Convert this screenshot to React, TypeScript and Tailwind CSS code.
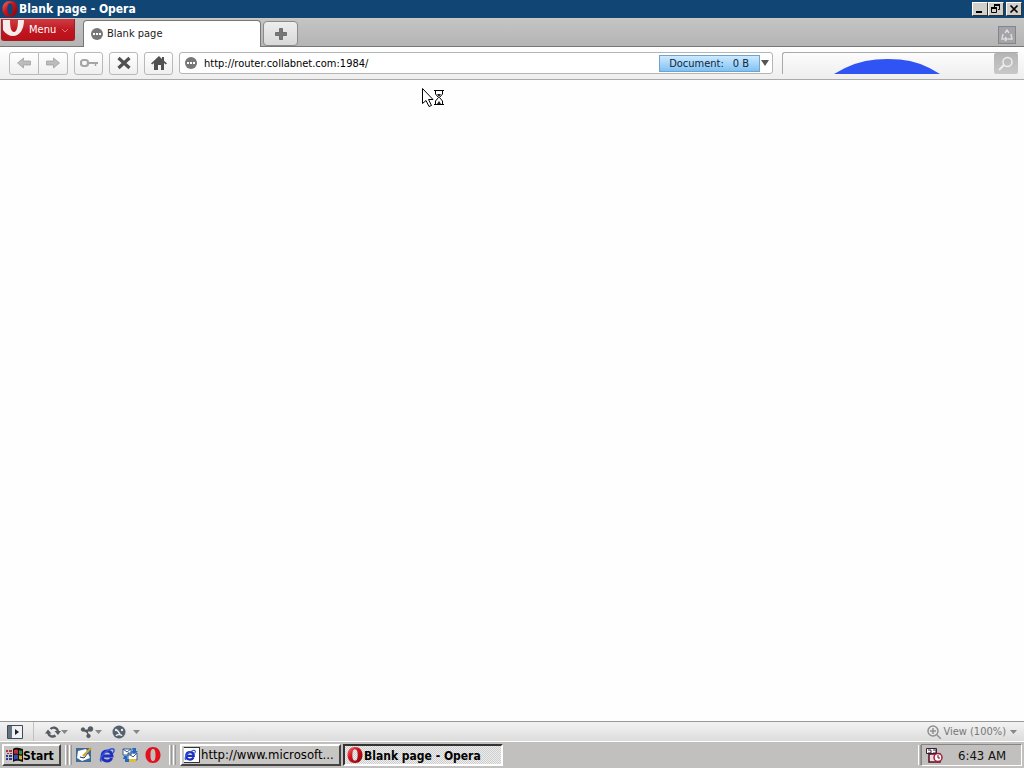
import type { ReactNode } from "react";

const OperaIcon = ({ className = "size-4" }: { className?: string }) => (
  <svg viewBox="0 0 16 16" className={`shrink-0 ${className}`} aria-hidden="true">
    <defs>
      <linearGradient id="operaRed" x1="0" y1="0" x2="1" y2="1">
        <stop offset="0" stopColor="#f0787c" />
        <stop offset=".4" stopColor="#d3131c" />
        <stop offset="1" stopColor="#7a0508" />
      </linearGradient>
    </defs>
    <path fillRule="evenodd" fill="url(#operaRed)" d="M8 0C3.400 0 .5 3.500 .5 8s2.900 8 7.500 8 7.500-3.500 7.500-8S12.600 0 8 0Zm0 2.200c1.900 0 2.700 2.400 2.700 5.800S9.900 13.800 8 13.800 5.300 11.400 5.300 8 6.100 2.200 8 2.200Z" />
  </svg>
);

const BubbleIcon = () => (
  <svg viewBox="0 0 12 12" className="size-3 shrink-0" aria-hidden="true">
    <circle cx="6" cy="6" r="6" fill="#777" />
    <path fill="#fff" d="M2 5h2v2H2zM5 5h2v2H5zM8 5h2v2H8z" />
  </svg>
);

const IeIcon = ({ className = "size-4" }: { className?: string }) => (
  <svg viewBox="0 0 16 16" className={`shrink-0 ${className}`} fill="none" aria-hidden="true">
    <path stroke="#1d2fc0" strokeWidth="3" d="M12.500 11C12 13 10 14 8 14c-3 0-5-2-5-5s2-5 5-5 5 2 5 5H4" />
    <path stroke="#3157d8" strokeWidth="1.500" d="M2.500 14.500C-1 13 5 4 12 2c4-1 3.500 2 2 4" />
  </svg>
);

const ToolButton = ({ label, className, children }: { label: string; className: string; children: ReactNode }) => (
  <button
    type="button"
    aria-label={label}
    className={`flex h-[23px] items-center justify-center border border-[#b9b9b9] bg-linear-to-b from-white to-[#efefef] ${className}`}
  >
    {children}
  </button>
);

const Caret = ({ className = "text-[#888]" }: { className?: string }) => (
  <svg viewBox="0 0 7 4" className={`h-1 w-[7px] shrink-0 ${className}`} aria-hidden="true">
    <path fill="currentColor" d="M0 0h7L3.500 4z" />
  </svg>
);

const raised = "border border-t-white border-l-white border-r-[#333] border-b-[#333]";

const CaptionButton = ({ label, children }: { label: string; children: ReactNode }) => (
  <button type="button" aria-label={label} className={`flex h-[14px] w-4 items-center justify-center bg-[#d2d0cb] ${raised}`}>
    <svg viewBox="0 0 12 10" className="h-[10px] w-3" fill="none" stroke="#000" aria-hidden="true">
      {children}
    </svg>
  </button>
);

const Grip = () => <span className="h-5 w-[3px] shrink-0 border-l border-l-white border-r border-r-[#999]" />;

const TitleBar = () => (
  <header className="flex h-[18px] shrink-0 items-center bg-[#114674] pl-[2px] pr-[2px]">
    <OperaIcon />
    <h1 className="ml-px flex-1 text-[12px] leading-[18px] font-bold text-white">Blank page - Opera</h1>
    <div className="flex">
      <CaptionButton label="Minimize"><path strokeWidth="2" d="M2 8h6" /></CaptionButton>
      <CaptionButton label="Restore">
        <path d="M4.500 3V.5h5v5H8M1.500 4.500h5v4h-5z" />
        <path strokeWidth="2" d="M4 1h6M1 4h6" />
      </CaptionButton>
      <span className="w-[2px]" />
      <CaptionButton label="Close"><path strokeWidth="1.700" d="m2.500 1.500 7 7m0-7-7 7" /></CaptionButton>
    </div>
  </header>
);

const TabBar = () => (
  <div className="flex h-[29px] shrink-0 border-t border-t-[#d0c8bd] bg-linear-to-b from-[#c4c4c4] to-[#b4b4b4]">
    <div className="w-[83px] shrink-0 border-b border-b-[#777]">
      <button type="button" className="ml-px flex h-[22px] w-[74px] items-center rounded-b-[3px] border border-t-0 border-[#9d2024] bg-linear-to-b from-[#cf3b44] via-[#c11720] to-[#b9101a] text-[11px] text-white">
        <svg viewBox="0 0 24 20" className="h-5 w-6 shrink-0" aria-hidden="true">
          <path fillRule="evenodd" fill="#f5ecec" d="M1 0h21c0 9-4 16-11 16-4 0-7-2-10-6Zm7 0c0 7 1 12 4 12s4-6 4-12Z" />
        </svg>
        <span className="ml-[3px] w-8 pt-[2px] text-left">Menu</span>
        <svg viewBox="0 0 8 5" className="mt-px h-[5px] w-2" fill="none" stroke="#dc747a" aria-hidden="true"><path d="m1 1 3 3 3-3" /></svg>
      </button>
    </div>
    <div className="mt-px flex w-[178px] shrink-0 items-center gap-1 rounded-t-[4px] border border-b-0 border-[#777] bg-white pl-[7px] text-[11px] text-[#222]">
      <BubbleIcon />
      <span className="pt-px">Blank page</span>
    </div>
    <div className="flex flex-1 items-start border-b border-b-[#777] pt-[2px] pl-[2px]">
      <button type="button" aria-label="New tab" className="flex h-[25px] w-[35px] items-center justify-center rounded-[4px] border border-[#8b8b8b] bg-linear-to-b from-[#eee] to-[#d8d8d8]">
        <svg viewBox="0 0 12 12" className="size-3" aria-hidden="true"><path fill="#777" stroke="#555" strokeWidth=".7" d="M4.500.5h3v4h4v3h-4v4h-3v-4h-4v-3h4z" /></svg>
      </button>
    </div>
    <div className="border-b border-b-[#777] pt-[7px] pr-2">
      <button type="button" aria-label="Closed tabs" className="flex size-[18px] items-center justify-center border border-[#85858c] bg-[#a3a3a8]">
        <svg viewBox="0 0 14 14" className="size-[14px]" fill="none" stroke="#dcdcdc" strokeWidth="1.500" aria-hidden="true">
          <path d="m5 5 2-3 2 3M3 6l-1 5h4M11 6l1 5H8M5 9l2 2-2 2" />
        </svg>
      </button>
    </div>
  </div>
);

const AddressBar = () => (
  <nav aria-label="Address bar" className="flex h-[33px] shrink-0 items-center border-b border-b-[#aaa] bg-linear-to-b from-white to-[#eee] pl-[9px] pr-[6px]">
    <ToolButton label="Back" className="w-[30px] rounded-l-[3px]">
      <svg viewBox="0 0 14 12" className="h-3 w-[14px]" aria-hidden="true"><path fill="#bdbdbd" stroke="#999" strokeWidth=".7" d="m.5 6 6-5v3h7v4h-7v3z" /></svg>
    </ToolButton>
    <ToolButton label="Forward" className="w-[29px] rounded-r-[3px] border-l-0">
      <svg viewBox="0 0 14 12" className="h-3 w-[14px]" aria-hidden="true"><path fill="#bdbdbd" stroke="#999" strokeWidth=".7" d="m13.500 6-6-5v3h-7v4h7v3z" /></svg>
    </ToolButton>
    <ToolButton label="Wand" className="ml-[6px] w-[29px] rounded-[3px]">
      <svg viewBox="0 0 18 10" className="h-[10px] w-[18px]" fill="none" stroke="#a5a5a5" aria-hidden="true"><rect x="1" y="2" width="7" height="6" rx="2.500" strokeWidth="2.200" /><path strokeWidth="2" d="M8 5h10" /><path strokeWidth="1.500" d="M15.500 5v3" /></svg>
    </ToolButton>
    <ToolButton label="Stop" className="ml-[6px] w-[29px] rounded-[3px]">
      <svg viewBox="0 0 14 14" className="size-[14px]" stroke="#505050" strokeWidth="3.200" aria-hidden="true"><path d="m1.500 2 11 10m0-10-11 10" /></svg>
    </ToolButton>
    <ToolButton label="Home" className="ml-[6px] w-[29px] rounded-[3px]">
      <svg viewBox="0 0 16 14" className="h-[14px] w-4" aria-hidden="true"><path fill="#505050" d="M8 0 0 7.500l1.200 1L3 7v7h4V9h3v5h3V7l1.800 1.500 1.200-1L13 4.800V1h-2v2z" /></svg>
    </ToolButton>
    <div className="ml-[6px] flex h-[22px] min-w-0 flex-[592] items-center rounded-[3px] border border-[#b5b5b5] bg-white pl-[5px] pr-px">
      <BubbleIcon />
      <input aria-label="Address" defaultValue="http://router.collabnet.com:1984/" className="ml-[7px] min-w-0 flex-1 bg-transparent pt-[2px] text-[11px] text-black outline-none" />
      <div className="flex h-[17px] w-[101px] shrink-0 items-center justify-center gap-[9px] border border-[#6fa5cd] bg-linear-to-b from-[#cdeaff] to-[#7fc1f3] pt-[2px] text-[11px] text-[#12243c]">
        <span>Document:</span>
        <span>0 B</span>
      </div>
      <button type="button" aria-label="Address history" className="flex h-5 w-[11px] items-center justify-center">
        <svg viewBox="0 0 8 6" className="h-[6px] w-2" aria-hidden="true"><path fill="#555" d="M0 0h8L4 6z" /></svg>
      </button>
    </div>
    <div className="ml-[9px] flex h-[22px] min-w-0 flex-[238] items-end rounded-tl-[3px] border-t border-l border-[#aaa]">
      <div className="flex h-[21px] min-w-0 flex-1 items-end">
        <input aria-label="Search" className="w-[51px] min-w-0 bg-transparent outline-none" />
        <svg viewBox="0 0 106 15" className="h-[15px] w-[106px] shrink-0" aria-hidden="true"><path fill="#3054f3" d="M0 15Q21 2 42 .5Q53-.3 66 .5Q86 2 106 15Z" /></svg>
      </div>
      <button type="button" aria-label="Start search" className="flex h-[21px] w-6 shrink-0 items-center justify-center rounded-[2px] bg-linear-to-b from-[#b5b5b5] to-[#c8c8c8]">
        <svg viewBox="0 0 18 16" className="h-4 w-[18px]" fill="none" stroke="#eee" strokeWidth="1.500" aria-hidden="true"><circle cx="10.500" cy="6" r="4.500" /><path strokeWidth="2" d="m7 9-5 5" /></svg>
      </button>
    </div>
  </nav>
);

const StatusBar = () => (
  <div className="flex h-5 shrink-0 items-center border-t border-t-[#999] bg-linear-to-b from-[#f3f3f3] to-[#dcdcdc] pl-[7px] pr-[7px]">
    <button type="button" aria-label="Panels" className="flex h-[14px] w-4">
      <svg viewBox="0 0 16 14" className="h-[14px] w-4" aria-hidden="true"><path fill="#eef2f6" stroke="#3f4a57" d="M.5.5h15v13H.5z" /><path fill="#67727f" d="M1 1h4v12H1z" /><path fill="#222" d="m8 4 4 3-4 3z" /></svg>
    </button>
    <span className="ml-[10px] h-full w-px bg-[#c2c2c2]" />
    <button type="button" aria-label="Synchronize" className="ml-[11px] flex items-center">
      <svg viewBox="0 0 16 14" className="h-[14px] w-4" fill="none" stroke="#555b61" strokeWidth="2.400" aria-hidden="true"><path d="M5.500 4C8 1.500 12 2.500 13 6M10.500 10.500C8 12.500 4 11.500 3 8" /><path fill="#555b61" stroke="none" d="M9.500 6H16l-3 4zM0 8.500h6.500L3 4.500z" /></svg>
      <Caret />
    </button>
    <button type="button" aria-label="Share" className="ml-3 flex items-center">
      <svg viewBox="0 0 15 14" className="h-[14px] w-[15px]" fill="#555b61" stroke="#555b61" aria-hidden="true"><circle cx="3" cy="4.500" r="1.700" /><circle cx="10.500" cy="4" r="2.300" /><circle cx="8.500" cy="11" r="1.700" /><path strokeWidth="1.500" d="m3 5 4 2 3-3M7 7l2 4" /></svg>
      <Caret />
    </button>
    <button type="button" aria-label="Turbo" className="ml-[10px] flex items-center gap-[7px]">
      <svg viewBox="0 0 14 14" className="size-[14px]" aria-hidden="true"><circle cx="7" cy="7" r="6.500" fill="#55616c" /><circle cx="4" cy="5" r="1.200" fill="#e8edf0" /><circle cx="10" cy="5" r="1.200" fill="#e8edf0" /><path fill="none" stroke="#e8edf0" strokeWidth="1.500" d="m5 5 3 4M4 11c1-2 5-2 6 0" /></svg>
      <Caret />
    </button>
    <button type="button" className="ml-auto flex items-center text-[11px] text-[#777]">
      <svg viewBox="0 0 14 14" className="mr-[2px] size-[14px]" fill="none" stroke="#909090" strokeWidth="1.500" aria-hidden="true"><circle cx="6" cy="6" r="5" /><path d="M6 3v6M3 6h6M10 10l4 4" /></svg>
      <span className="mr-1 pt-[2px]">View (100%)</span>
      <Caret />
    </button>
  </div>
);

const Taskbar = () => (
  <footer className="flex h-[27px] shrink-0 items-center border-t border-t-white bg-[#c1c0be] pl-[2px] pr-[2px]">
    <button type="button" className="flex h-[22px] w-[59px] shrink-0 items-center border-2 border-t-white border-l-white border-r-[#444] border-b-[#444] bg-[#c8c6c3] pl-[2px] text-[12px] font-bold text-black">
      <svg viewBox="0 0 17 16" className="h-4 w-[17px] shrink-0" aria-hidden="true">
        <path fill="#111" d="M7 2c3-2 5-1 10 0v13c-4-1-7-2-10 0z" />
        <path fill="#c52a38" d="M8 3q2-1 4 0v4q-2-1-4 0z" />
        <path fill="#3c8b4b" d="M13 3.200q2 .8 3 .3v4q-2 0-3-.5z" />
        <path fill="#3548bb" d="M8 8q2-1 4 0v4.500q-2-1-4 .5z" />
        <path fill="#cbb32b" d="M13 8.200q2 .8 3 .3v4q-2 0-3-.5z" />
        <path fill="#a73549" d="M0 3h2v2H0zM3 3h3v2H3zM1 6h2v1H1zM4 6h2v1H4z" />
        <path fill="#353594" d="M0 8h2v2H0zM3 8h3v2H3zM0 11h2v2H0zM3 11h3v2H3z" />
      </svg>
      <span className="pt-px">Start</span>
    </button>
    <div className="ml-1 flex items-center"><Grip /><span className="w-px" /><Grip /></div>
    <div className="ml-1 flex gap-[7px]">
      <button type="button" aria-label="Show desktop" className="size-4">
        <svg viewBox="0 0 16 16" className="size-4" aria-hidden="true"><path fill="#3e6a96" d="M0 1h15v14H0z" /><path fill="#fff" d="m2 4 8-2 4 9-8 3-5-3z" /><path stroke="#1c315f" d="m4 10 4 1 4-5" fill="none" /><path stroke="#d1a722" strokeWidth="2" d="m7 9 8-8" /></svg>
      </button>
      <button type="button" aria-label="Internet Explorer" className="size-4"><IeIcon /></button>
      <button type="button" aria-label="Outlook Express" className="size-4">
        <svg viewBox="0 0 16 16" className="size-4" aria-hidden="true"><path fill="#fff" stroke="#345b91" d="M1 2h8v6H1zM6 6h9v7H6z" /><path fill="none" stroke="#345b91" d="m1 2 4 3 4-3M6 6l5 4 4-4" /><path fill="#2468c5" d="M10 1h4v3h2l-4 3-3-3h2zM2 9h3v3h2v3H3v-3H1z" /><path fill="#e1bd32" d="M7 12h7v3H7z" /></svg>
      </button>
      <button type="button" aria-label="Opera" className="size-4">
        <svg viewBox="0 0 16 16" className="size-4" aria-hidden="true"><path fill="#e2111b" fillRule="evenodd" d="M8 0C3.500 0 .5 3.500.5 8s3 8 7.500 8 7.500-3.500 7.500-8S12.500 0 8 0Zm0 2c2 0 2.500 2.500 2.500 6S10 14 8 14s-2.500-2.500-2.500-6S6 2 8 2Z" /></svg>
      </button>
    </div>
    <div className="ml-2 flex items-center"><Grip /><span className="w-px" /><Grip /></div>
    <button type="button" className="ml-1 flex h-[22px] w-[161px] min-w-0 items-center border-2 border-t-white border-l-white border-r-[#444] border-b-[#444] bg-[#c8c6c3] pl-[2px] text-[13px] text-black">
      <span className="mr-px flex size-4 shrink-0 items-center border border-l-0 border-[#333] bg-white"><IeIcon className="size-3" /></span>
      <span className="whitespace-nowrap">http://www.microsoft...</span>
    </button>
    <button type="button" className="ml-[2px] flex h-[22px] w-[160px] min-w-0 items-center border-2 border-t-[#333] border-l-[#333] border-r-white border-b-white bg-[#dededd] bg-[repeating-conic-gradient(#cecece_0_25%,#ededed_0_50%)] bg-size-[2px_2px] pl-[2px] text-[12px] font-bold text-black">
      <OperaIcon />
      <span className="ml-px whitespace-nowrap pt-[2px]">Blank page - Opera</span>
    </button>
    <div className="ml-auto flex h-6 items-center">
      <Grip />
      <div className="flex h-[22px] w-[101px] items-center border border-t-[#858585] border-l-[#858585] border-r-white border-b-white pl-1 text-[13px] text-[#111]">
        <svg viewBox="0 0 18 16" className="mr-[14px] h-4 w-[18px] shrink-0" aria-hidden="true"><path fill="#fff" stroke="#3e1b2b" d="M.5 1.500h10v5H.5z" /><path fill="none" stroke="#29263c" d="M2 3h3v3H2m5-3h3v3H7" /><path fill="#f2d9df" stroke="#521126" strokeWidth="1.500" d="M3 7h11v8H3z" /><circle cx="12" cy="10.500" r="4" fill="#fff" stroke="#a81938" strokeWidth="1.500" /><path stroke="#521126" d="M12 8v3h2" fill="none" /></svg>
        <time className="whitespace-nowrap pt-[2px]">6:43 AM</time>
      </div>
    </div>
  </footer>
);

const BusyCursor = () => (
  <svg viewBox="0 0 23 20" className="absolute top-2 left-[422px] h-5 w-[23px]" aria-hidden="true">
    <path fill="#fff" stroke="#000" d="M.5.500v15l3.500-3 3 6 2.500-1-3-6H11z" />
    <path fill="#fff" stroke="#000" d="M12 2.500h10M12 16.500h10M13.500 3v3l3 3.500-3 3.500v3M20.500 3v3l-3 3.500 3 3.500v3" />
    <path fill="#222" d="M15 6h4l-2 3zM15 16l2-3 2 3z" />
  </svg>
);

export default function App() {
  return (
    <div className="flex min-h-screen flex-col bg-white font-['Tahoma','DejaVu_Sans_Condensed',sans-serif]">
      <TitleBar />
      <TabBar />
      <AddressBar />
      <main className="relative flex-1 bg-[#fefefe]">
        <BusyCursor />
      </main>
      <StatusBar />
      <Taskbar />
    </div>
  );
}
